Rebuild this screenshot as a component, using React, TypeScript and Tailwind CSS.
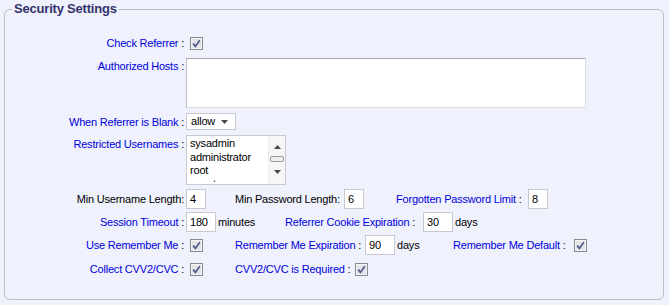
import React from "react";

const font = { fontFamily: '"Liberation Sans", Arial, sans-serif' };

function Blue({ children }: { children: React.ReactNode }) {
  return <span className="text-[#0000dd]">{children}</span>;
}
function Colon() {
  return <span className="text-black"> :</span>;
}

function Check() {
  return (
    <span className="block w-[13px] h-[13px] shrink-0">
      <svg width="13" height="13" viewBox="0 0 13 13">
        <rect x="0.5" y="0.5" width="12" height="12" fill="#e4e4e8" stroke="#8a8a8e" />
        <rect x="1.5" y="1.5" width="10" height="10" fill="none" stroke="#f4f4f6" />
        <path d="M3.2 6.6 L5.4 9.4 L9.8 3.2" fill="none" stroke="#4a5886" strokeWidth="1.7" />
      </svg>
    </span>
  );
}

function Box({ w, v, ml }: { w: string; v: string; ml: string }) {
  return (
    <div
      className={`${w} ${ml} h-[20px] shrink-0 bg-white border border-[#c8c8d0] text-black pl-[3px] leading-[18px]`}
    >
      {v}
    </div>
  );
}

function Arrow({ up }: { up?: boolean }) {
  return (
    <svg width="7" height="4" viewBox="0 0 7 4" className="block">
      {up ? <polygon points="0,4 7,4 3.5,0" fill="#4a4a4a" /> : <polygon points="0,0 7,0 3.5,4" fill="#4a4a4a" />}
    </svg>
  );
}

export default function App() {
  return (
    <div className="w-[669px] h-[305px] bg-[#eff1fc] text-[11px] tracking-[-0.2px] leading-[14px]" style={font}>
      <fieldset className="ml-[4px] w-[660px] h-[300px] border border-[#bcbcc4] rounded-[6px]">
        <legend className="ml-[7px] px-[2px] leading-[18px] text-[13px] font-bold text-[#33336a]">
          Security Settings
        </legend>
        <div className="flex flex-col pt-[15px]">
          {/* Row 1 */}
          <div className="flex items-center h-[20px]">
            <div className="w-[179px] shrink-0 text-right whitespace-nowrap">
              <Blue>Check Referrer</Blue>
              <Colon />
            </div>
            <div className="ml-[6px]">
              <Check />
            </div>
          </div>
          {/* Row 2 */}
          <div className="flex items-start h-[50px] mt-[5px]">
            <div className="w-[179px] shrink-0 text-right whitespace-nowrap pt-[1px]">
              <Blue>Authorized Hosts</Blue>
              <Colon />
            </div>
            <div className="ml-[2px] w-[400px] h-[50px] bg-white border border-[#dcdce2] border-t-[#a8a8ae] border-l-[#bcbcc2]" />
          </div>
          {/* Row 3 */}
          <div className="flex items-center h-[17px] mt-[5px]">
            <div className="w-[179px] shrink-0 text-right whitespace-nowrap">
              <Blue>When Referrer is Blank</Blue>
              <Colon />
            </div>
            <div className="ml-[2px] w-[50px] h-[17px] bg-white border border-[#c8c8d0] flex items-center justify-between pl-[4px] pr-[7px] text-black">
              <span className="leading-[15px]">allow</span>
              <Arrow />
            </div>
          </div>
          {/* Row 4 */}
          <div className="flex items-start h-[50px] mt-[5px]">
            <div className="w-[179px] shrink-0 text-right whitespace-nowrap pt-[2px]">
              <Blue>Restricted Usernames</Blue>
              <Colon />
            </div>
            <div className="ml-[2px] w-[100px] h-[50px] bg-white border border-[#c8c8d0] flex overflow-hidden">
              <div className="flex-1 self-start h-[46px] pl-[3px] pt-[1px] leading-[13.5px] text-black overflow-hidden whitespace-nowrap">
                <div>sysadmin</div>
                <div>administrator</div>
                <div>root</div>
                <div>guest</div>
              </div>
              <div className="w-[17px] h-full bg-[#f6f6f8] border-l border-[#ececf0] flex flex-col items-center">
                <div className="mt-[9px]">
                  <Arrow up />
                </div>
                <div className="mt-[7px] w-[14px] h-[6px] rounded-[2px] border border-[#9a9a9a] bg-[#f0f0f0]" />
                <div className="mt-[8px]">
                  <Arrow />
                </div>
              </div>
            </div>
          </div>
          {/* Row 5 */}
          <div className="flex items-center h-[20px] mt-[4px] whitespace-nowrap">
            <div className="w-[179px] shrink-0 text-right text-black">Min Username Length:</div>
            <Box w="w-[20px]" ml="ml-[2px]" v="4" />
            <div className="ml-[29px] w-[106px] shrink-0 text-black">Min Password Length:</div>
            <Box w="w-[20px]" ml="ml-[3px]" v="6" />
            <div className="ml-[32px] w-[129px] shrink-0">
              <Blue>Forgotten Password Limit</Blue>
              <Colon />
            </div>
            <Box w="w-[20px]" ml="ml-[3px]" v="8" />
          </div>
          {/* Row 6 */}
          <div className="flex items-center h-[20px] mt-[3px] whitespace-nowrap">
            <div className="w-[179px] shrink-0 text-right">
              <Blue>Session Timeout</Blue>
              <Colon />
            </div>
            <Box w="w-[30px]" ml="ml-[2px]" v="180" />
            <div className="ml-[2px] w-[67px] shrink-0 text-black">minutes</div>
            <div className="w-[135px] shrink-0">
              <Blue>Referrer Cookie Expiration</Blue>
              <Colon />
            </div>
            <Box w="w-[30px]" ml="ml-[3px]" v="30" />
            <div className="ml-[2px] text-black">days</div>
          </div>
          {/* Row 7 */}
          <div className="flex items-center h-[20px] mt-[3px] whitespace-nowrap">
            <div className="w-[179px] shrink-0 text-right">
              <Blue>Use Remember Me</Blue>
              <Colon />
            </div>
            <div className="ml-[6px]">
              <Check />
            </div>
            <div className="ml-[32px] w-[127px] shrink-0">
              <Blue>Remember Me Expiration</Blue>
              <Colon />
            </div>
            <Box w="w-[30px]" ml="ml-[3px]" v="90" />
            <div className="ml-[2px] w-[56px] shrink-0 text-black">days</div>
            <div className="w-[118px] shrink-0">
              <Blue>Remember Me Default</Blue>
              <Colon />
            </div>
            <div className="ml-[3px]">
              <Check />
            </div>
          </div>
          {/* Row 8 */}
          <div className="flex items-center h-[20px] mt-[4px] whitespace-nowrap">
            <div className="w-[179px] shrink-0 text-right">
              <Blue>Collect CVV2/CVC</Blue>
              <Colon />
            </div>
            <div className="ml-[6px]">
              <Check />
            </div>
            <div className="ml-[32px] w-[117px] shrink-0">
              <Blue>CVV2/CVC is Required</Blue>
              <Colon />
            </div>
            <div className="ml-[3px]">
              <Check />
            </div>
          </div>
        </div>
      </fieldset>
    </div>
  );
}
